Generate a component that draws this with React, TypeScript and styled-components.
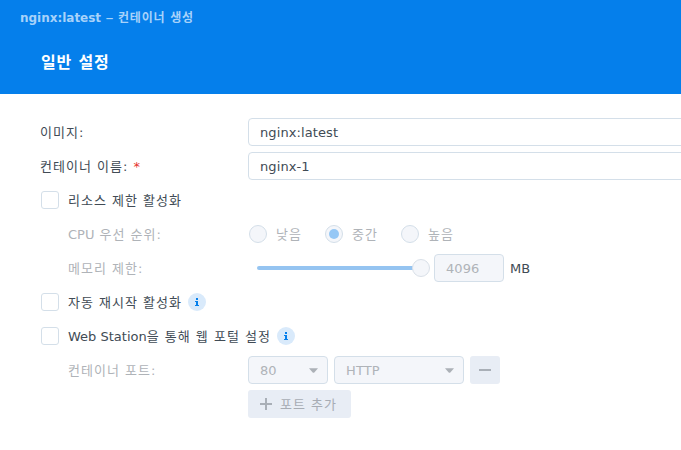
import React from "react";
import styled, { createGlobalStyle } from "styled-components";

const GlobalStyle = createGlobalStyle`
  *, *::before, *::after { box-sizing: border-box; }
  body {
    margin: 0;
    overflow: hidden;
    background: #fff;
    color: #414b55;
    font: 13px/18px "DejaVu Sans", "Noto Sans CJK KR", sans-serif;
  }
`;

const Window = styled.div`
  width: 100%;
  height: 450px;
  overflow: hidden;
  background: #fff;
`;

const Header = styled.header`
  height: 94px;
  background: #057feb;
`;

const WindowTitle = styled.div`
  display: flex;
  gap: 4px;
  padding: 9px 0 0 20px;
  height: 42px;
  color: #a7d2fa;
  font-size: 12px;
  font-weight: 700;
  letter-spacing: -0.02px;
  white-space: nowrap;
`;

const Dash = styled.span`
  width: 9px;
  font-size: 16px;
  font-weight: 400;
  text-align: center;
`;

const StepTitle = styled.h1`
  margin: 0;
  padding: 9px 0 0 41px;
  color: #fff;
  font-size: 16px;
  line-height: 24px;
  font-weight: 700;
`;

const Form = styled.main`
  padding: 21px 0 0 40px;
`;

const Row = styled.div`
  display: flex;
  align-items: center;
  height: 34px;
  white-space: nowrap;
`;

const Label = styled.label<{ $sub?: boolean }>`
  flex: none;
  width: 208px;
  padding: 2px 0 0 ${(p) => (p.$sub ? 28 : 0)}px;
  color: ${(p) => (p.$sub ? "#afb3b8" : "inherit")};
`;

const Caption = styled.span`
  padding-top: 2px;
`;

const Ko = styled.span<{ $gap?: number }>`
  letter-spacing: ${(p) => p.$gap ?? 1}px;
`;

const Required = styled.span`
  color: #e5332d;
`;

const Field = styled.div<{ $width?: number; $disabled?: boolean }>`
  display: flex;
  flex: none;
  align-items: center;
  justify-content: space-between;
  width: ${(p) => p.$width ?? 460}px;
  height: 28px;
  padding: 0 9px 0 11px;
  border: 1px solid #d4dfe9;
  border-radius: 4px;
  background: ${(p) => (p.$disabled ? "#f4f6fa" : "#fff")};
  color: ${(p) => (p.$disabled ? "#afb3b8" : "inherit")};
  letter-spacing: 0.1px;
`;

const Checkbox = styled.span`
  flex: none;
  width: 18px;
  height: 18px;
  margin: 0 9px 0 1px;
  border: 1px solid #d4dfe9;
  border-radius: 3px;
`;

const InfoBadge = styled.span`
  flex: none;
  display: flex;
  width: 18px;
  height: 18px;
  margin-left: 6px;
  border-radius: 50%;
  background: #d9eafb;
`;

const RadioOption = styled.span`
  display: flex;
  align-items: center;
  width: 76px;
  padding-left: 1px;
  color: #afb3b8;
`;

const Radio = styled.span<{ $checked?: boolean }>`
  display: grid;
  place-items: center;
  width: 18px;
  height: 18px;
  margin-right: 9px;
  border: 1px solid #d4dfe9;
  border-radius: 50%;
  background: #f4f6fa;
  &::after {
    content: "";
    display: ${(p) => (p.$checked ? "block" : "none")};
    width: 10px;
    height: 10px;
    border-radius: 50%;
    background: #95c7f5;
  }
`;

const Slider = styled.div`
  display: flex;
  align-items: center;
  width: 173px;
  margin: 0 4px 0 9px;
`;

const Track = styled.span`
  flex: 1;
  height: 4px;
  border-radius: 2px 0 0 2px;
  background: #95c4f1;
`;

const Thumb = styled.span`
  width: 18px;
  height: 18px;
  margin-left: -1px;
  border: 1px solid #d9e0e8;
  border-radius: 50%;
  background: #f4f6fa;
`;

const Unit = styled(Caption)`
  margin-left: 6px;
`;

const PortControls = styled.div`
  display: flex;
  gap: 6px;
`;

const Button = styled.button<{ $width: number }>`
  display: flex;
  align-items: center;
  width: ${(p) => p.$width}px;
  height: 28px;
  padding: 0 9px;
  border: 0;
  border-radius: 3px;
  background: #e8edf5;
  color: #a7acb4;
  font: inherit;
  white-space: nowrap;
  svg { flex: none; }
`;

const AddButton = styled(Button)`
  margin-left: 208px;
  padding-left: 12px;
  gap: 8px;
`;

const Info = () => (
  <InfoBadge>
    <svg width="18" height="18" viewBox="0 0 18 18" fill="#057feb">
      <path d="M8 5h2v2H8zM7 8h3v4h1v1H7v-1h1V9H7z" />
    </svg>
  </InfoBadge>
);

const Arrow = () => (
  <svg width="9" height="5" viewBox="0 0 9 5" fill="#acb1b7">
    <path d="M0 .3h9L5.3 4.4q-.8.8-1.6 0z" />
  </svg>
);

const priorities = ["낮음", "중간", "높음"];

export default function App() {
  return (
    <Window lang="ko">
      <GlobalStyle />
      <Header>
        <WindowTitle>
          <span>nginx:latest</span>
          <Dash>–</Dash>
          <Ko $gap={0.75}>컨테이너 생성</Ko>
        </WindowTitle>
        <StepTitle><Ko $gap={0.8}>일반 설정</Ko></StepTitle>
      </Header>
      <Form>
        <Row>
          <Label><Ko>이미지:</Ko></Label>
          <Field><Caption>nginx:latest</Caption></Field>
        </Row>
        <Row>
          <Label><Ko>컨테이너 이름: </Ko><Required>*</Required></Label>
          <Field><Caption>nginx-1</Caption></Field>
        </Row>
        <Row><Checkbox /><Caption><Ko>리소스 제한 활성화</Ko></Caption></Row>
        <Row>
          <Label $sub>CPU<Ko> 우선 순위:</Ko></Label>
          {priorities.map((name, i) => (
            <RadioOption key={name}>
              <Radio $checked={i === 1} />
              <Caption><Ko>{name}</Ko></Caption>
            </RadioOption>
          ))}
        </Row>
        <Row>
          <Label $sub><Ko>메모리 제한:</Ko></Label>
          <Slider><Track /><Thumb /></Slider>
          <Field $width={70} $disabled><Caption>4096</Caption></Field>
          <Unit>MB</Unit>
        </Row>
        <Row><Checkbox /><Caption><Ko>자동 재시작 활성화</Ko></Caption><Info /></Row>
        <Row>
          <Checkbox />
          <Caption>Web Station<Ko>을 통해 웹 포털 설정</Ko></Caption>
          <Info />
        </Row>
        <Row>
          <Label $sub><Ko>컨테이너 포트:</Ko></Label>
          <PortControls>
            <Field $width={80} $disabled><Caption>80</Caption><Arrow /></Field>
            <Field $width={130} $disabled><Caption>HTTP</Caption><Arrow /></Field>
            <Button $width={30} aria-label="제거">
              <svg width="12" height="12" viewBox="0 0 12 12"><path d="M0 6h12" stroke="#a9afb7" strokeWidth="2" /></svg>
            </Button>
          </PortControls>
        </Row>
        <Row>
          <AddButton $width={103}>
            <svg width="12" height="12" viewBox="0 0 12 12"><path d="M0 6h12M6 0v12" stroke="#a9afb7" strokeWidth="2" /></svg>
            <Caption><Ko>포트 추가</Ko></Caption>
          </AddButton>
        </Row>
      </Form>
    </Window>
  );
}
